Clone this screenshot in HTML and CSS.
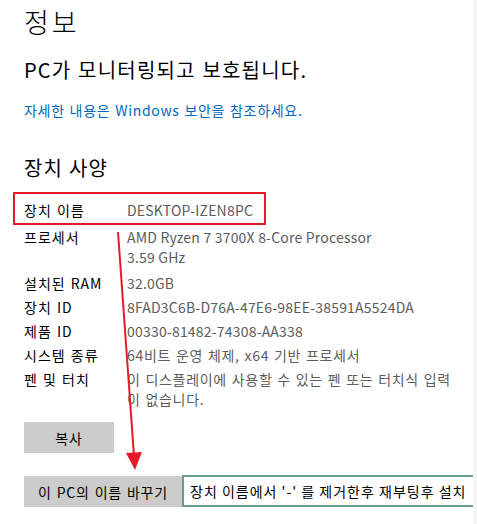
FILE: index.html
```html
<!DOCTYPE html>
<html>
<head>
    <meta charset="UTF-8">
    <meta name="viewport" content="width=device-width, initial-scale=1.0">
    <title>정보</title>
    <link rel="stylesheet" href="styles.css">
</head>
<body>
    <main class="page">
        <h1 class="title">정보</h1>
        <p class="status">PC가 모니터링되고 보호됩니다.</p>
        <a class="link" href="#">자세한 내용은 Windows 보안을 참조하세요.</a>

        <h2 class="subtitle">장치 사양</h2>
        <dl class="specs">
            <div class="row"><dt>장치 이름</dt><dd>DESKTOP-IZEN8PC</dd></div>
            <div class="row tall"><dt>프로세서</dt><dd>AMD Ryzen 7 3700X 8-Core Processor<br>3.59 GHz</dd></div>
            <div class="row"><dt>설치된 RAM</dt><dd>32.0GB</dd></div>
            <div class="row"><dt>장치 ID</dt><dd>8FAD3C6B-D76A-47E6-98EE-38591A5524DA</dd></div>
            <div class="row"><dt>제품 ID</dt><dd>00330-81482-74308-AA338</dd></div>
            <div class="row"><dt>시스템 종류</dt><dd class="ko">64비트 운영 체제, x64 기반 프로세서</dd></div>
            <div class="row"><dt>펜 및 터치</dt><dd class="ko">이 디스플레이에 사용할 수 있는 펜 또는 터치식 입력이 없습니다.</dd></div>
        </dl>

        <button class="btn copy">복사</button>
        <div class="rename">
            <button class="btn">이 PC의 이름 바꾸기</button>
            <div class="note">장치 이름에서 '-' 를 제거한후 재부팅후 설치</div>
        </div>

        <div class="mark-box"></div>
        <svg class="mark-arrow" width="40" height="250" viewBox="0 0 40 250">
            <line x1="8" y1="2" x2="24" y2="226" stroke="#e81a2a" stroke-width="2"/>
            <polygon points="16,223 32,222 25,240" fill="#e81a2a"/>
        </svg>
    </main>
    <div class="edge"></div>
</body>
</html>
```
FILE: styles.css
```css
body {
    margin: 0;
    padding: 0;
    background: #fff;
    font-family: "Noto Sans CJK KR", "Liberation Sans", sans-serif;
    color: #000;
}
.page {
    position: relative;
    padding: 0 24px;
    width: 477px;
    height: 524px;
    box-sizing: border-box;
}
.title {
    margin: 0;
    padding-top: 2px;
    font-size: 27px;
    font-weight: 300;
    line-height: 40px;
    letter-spacing: 3px;
}
.status {
    margin: 13px 0 0;
    font-size: 20px;
    font-weight: 400;
    line-height: 30px;
    letter-spacing: 1.2px;
    word-spacing: 1px;
}
.link {
    display: block;
    margin-top: 15px;
    color: #0067c0;
    text-decoration: none;
    font-size: 14px;
    line-height: 20px;
    letter-spacing: 0.7px;
    word-spacing: 1px;
}
.subtitle {
    margin: 33px 0 0;
    font-size: 20px;
    font-weight: 400;
    line-height: 30px;
    letter-spacing: 1.2px;
}
.specs {
    margin: 17px 0 0;
    font-size: 14px;
    line-height: 20px;
}
.row {
    display: flex;
    margin-bottom: 4px;
}
.row:first-child {
    margin-bottom: 7px;
}
.row.tall {
    margin-bottom: 6px;
}
.row dt {
    width: 103px;
    flex-shrink: 0;
    letter-spacing: 1px;
    word-spacing: 1px;
}
.row dd {
    margin: 0;
    flex-shrink: 0;
    width: 336px;
    color: #5c5c5c;
    letter-spacing: 0.2px;
}
.row dd.ko {
    letter-spacing: 0.7px;
    word-spacing: 1px;
}
.btn {
    display: block;
    flex-shrink: 0;
    height: 31px;
    padding: 0;
    border: none;
    background: #cccccc;
    color: #000;
    font-family: inherit;
    font-size: 14px;
    letter-spacing: 0.8px;
    word-spacing: 1px;
}
.copy {
    margin-top: 13px;
    width: 90px;
}
.rename {
    display: flex;
    margin-top: 23px;
    margin-right: -24px;
}
.rename .btn {
    width: 158px;
}
.note {
    box-sizing: border-box;
    flex-shrink: 0;
    height: 32px;
    margin-top: -1px;
    padding: 0 6px;
    border: 2px solid #6b9e88;
    background: #fff;
    font-size: 14px;
    line-height: 28px;
    white-space: nowrap;
    overflow: hidden;
    width: 293px;
    letter-spacing: 1px;
}
.mark-box {
    position: absolute;
    left: 13px;
    top: 192px;
    width: 253px;
    height: 33px;
    box-sizing: border-box;
    border: 2.5px solid #e81a2a;
}
.mark-arrow {
    position: absolute;
    left: 110px;
    top: 230px;
}
.edge {
    position: absolute;
    right: 0;
    top: 0;
    width: 4px;
    height: 524px;
    background: #f6f6f6;
}
```
